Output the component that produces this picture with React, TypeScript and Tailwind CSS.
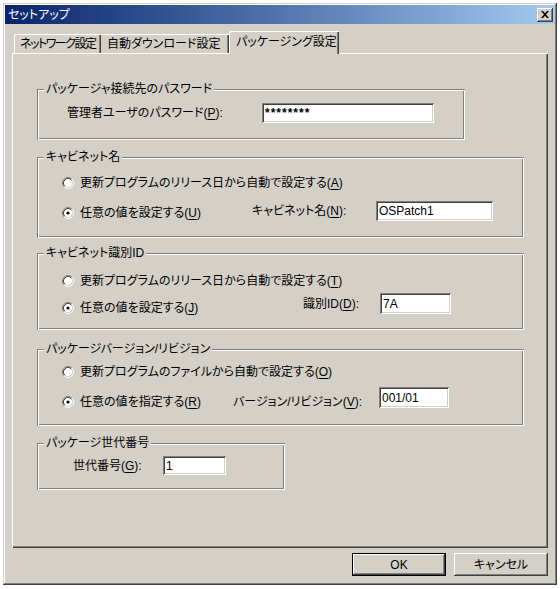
import type { ReactNode } from "react";

const ui =
  "font-['Liberation_Sans','Noto_Sans_CJK_JP',sans-serif] text-[12px] leading-[14px] text-black [font-feature-settings:'palt']";

const raised =
  "shadow-[inset_-1px_-1px_#404040,inset_1px_1px_#fff,inset_-2px_-2px_#808080]";

function Key(props: { k: string }) {
  return (
    <>
      (<span className="underline underline-offset-[2px]">{props.k}</span>)
    </>
  );
}

function Radio(props: { checked?: boolean }) {
  return (
    <svg width="12" height="12" viewBox="0 0 12 12" className="shrink-0">
      <circle cx="6" cy="6" r="4.5" fill="#fff" />
      <path d="M2.11 9.89A5.5 5.5 0 0 1 9.89 2.11" fill="none" stroke="#808080" />
      <path d="M9.89 2.11A5.5 5.5 0 0 1 2.11 9.89" fill="none" stroke="#fff" />
      <path d="M2.82 9.18A4.5 4.5 0 0 1 9.18 2.82" fill="none" stroke="#404040" />
      <path d="M9.18 2.82A4.5 4.5 0 0 1 2.82 9.18" fill="none" stroke="#d4d0c8" />
      {props.checked && <circle cx="6" cy="6" r="1.6" fill="#000" />}
    </svg>
  );
}

function Field(props: { value: string; className: string }) {
  return (
    <div
      className={`bg-white flex items-center pl-[3px] shrink-0 shadow-[inset_1px_1px_#808080,inset_-1px_-1px_#fff,inset_2px_2px_#404040,inset_-2px_-2px_#d4d0c8] ${props.className}`}
    >
      {props.value}
    </div>
  );
}

function Group(props: { title: string; className: string; children: ReactNode }) {
  return (
    <div
      className={`relative shrink-0 shadow-[inset_1px_1px_#808080,inset_-1px_-1px_#fff,inset_2px_2px_#fff,inset_-2px_-2px_#808080] ${props.className}`}
    >
      <span className="absolute left-[7px] top-[-7px] bg-[#d4d0c8] px-[2px] whitespace-nowrap">
        {props.title}
      </span>
      {props.children}
    </div>
  );
}

function Option(props: { checked?: boolean; children: ReactNode; className?: string }) {
  return (
    <div className={`flex items-center gap-[6px] ${props.className ?? ""}`}>
      <Radio checked={props.checked} />
      <span className="whitespace-nowrap">{props.children}</span>
    </div>
  );
}

export default function App() {
  return (
    <div className={`w-[560px] h-[589px] bg-white p-[3px] ${ui}`}>
      <div className="w-[554px] h-[582px] bg-[#d4d0c8] p-[2px] flex flex-col shadow-[inset_-1px_-1px_#404040,inset_1px_1px_#d4d0c8,inset_-2px_-2px_#808080,inset_2px_2px_#fff]">
        {/* title bar */}
        <div className="h-[19px] flex items-center justify-between bg-linear-to-r from-[#0a246a] to-[#a6caf0] pl-[3px] pr-[2px]">
          <span className="text-white">セットアップ</span>
          <div className={`w-[16px] h-[14px] bg-[#d4d0c8] flex items-center justify-center ${raised}`}>
            <svg width="8" height="7" viewBox="0 0 8 7">
              <path d="M0 0h2l2 2.2L6 0h2L5 3.5 8 7H6L4 4.8 2 7H0l3-3.5z" fill="#000" />
            </svg>
          </div>
        </div>

        {/* tabs */}
        <div className="mt-[7px] ml-[9px] flex items-end h-[22px] whitespace-nowrap">
          <div className="w-[87px] h-[19px] shrink-0 flex items-center pl-[6px] tracking-[-1.5px] rounded-tl-[2px] shadow-[inset_1px_1px_#fff,inset_-1px_0_#404040,inset_-2px_0_#808080]">
            ネットワーク設定
          </div>
          <div className="w-[128px] h-[19px] shrink-0 flex items-center pl-[6px] shadow-[inset_0_1px_#fff,inset_-1px_0_#404040,inset_-2px_0_#808080]">
            自動ダウンロード設定
          </div>
          <div className="relative z-10 w-[110px] h-[23px] shrink-0 -mb-[1px] bg-[#d4d0c8] flex items-center pl-[7px] pb-[2px] rounded-tl-[2px] shadow-[inset_1px_1px_#fff,inset_-1px_0_#404040,inset_-2px_0_#808080]">
            パッケージング設定
          </div>
        </div>

        {/* panel */}
        <div className="mx-[7px] w-[536px] h-[495px] pl-[25px] flex flex-col shadow-[inset_1px_1px_#fff,inset_-1px_-1px_#404040,inset_-2px_-2px_#808080]">
          <Group title="パッケージャ接続先のパスワード" className="mt-[36px] w-[428px] h-[51px] pt-[14px]">
            <div className="flex items-center h-[20px]">
              <span className="pl-[30px] w-[225px] whitespace-nowrap">
                管理者ユーザのパスワード<Key k="P" />:
              </span>
              <Field value="********" className="w-[172px] h-[20px] font-bold tracking-[1px]" />
            </div>
          </Group>

          <Group title="キャビネット名" className="mt-[17px] w-[487px] h-[81px] pt-[16px] pl-[25px]">
            <div className="flex items-center h-[20px]">
              <Option>
                更新プログラムのリリース日から自動で設定する<Key k="A" />
              </Option>
            </div>
            <div className="mt-[8px] flex items-center h-[20px]">
              <Option checked className="w-[190px] mt-[4px]">
                任意の値を設定する<Key k="U" />
              </Option>
              <span className="w-[124px] whitespace-nowrap">
                キャビネット名<Key k="N" />:
              </span>
              <Field value="OSPatch1" className="w-[117px] h-[20px]" />
            </div>
          </Group>

          <Group title="キャビネット識別ID" className="mt-[15px] w-[487px] h-[77px] pt-[18px] pl-[25px]">
            <div className="flex items-center h-[20px]">
              <Option>
                更新プログラムのリリース日から自動で設定する<Key k="T" />
              </Option>
            </div>
            <div className="mt-[2px] flex items-center h-[21px]">
              <Option checked className="w-[241px] mt-[8px]">
                任意の値を設定する<Key k="J" />
              </Option>
              <span className="w-[77px] whitespace-nowrap">
                識別ID<Key k="D" />:
              </span>
              <Field value="7A" className="w-[71px] h-[21px]" />
            </div>
          </Group>

          <Group title="パッケージバージョン/リビジョン" className="mt-[19px] w-[487px] h-[77px] pt-[13px] pl-[25px]">
            <div className="flex items-center h-[20px]">
              <Option>
                更新プログラムのファイルから自動で設定する<Key k="O" />
              </Option>
            </div>
            <div className="mt-[5px] flex items-center h-[21px]">
              <Option checked className="w-[171px] mt-[9px]">
                任意の値を指定する<Key k="R" />
              </Option>
              <span className="w-[146px] mt-[9px] whitespace-nowrap">
                バージョン/リビジョン<Key k="V" />:
              </span>
              <Field value="001/01" className="w-[70px] h-[21px]" />
            </div>
          </Group>

          <Group title="パッケージ世代番号" className="mt-[17px] w-[248px] h-[47px] pt-[13px]">
            <div className="flex items-center h-[19px]">
              <span className="pl-[36px] w-[126px] whitespace-nowrap">
                世代番号<Key k="G" />:
              </span>
              <Field value="1" className="w-[63px] h-[19px]" />
            </div>
          </Group>
        </div>

        {/* buttons */}
        <div className="mt-[5px] flex justify-end gap-[8px] pr-[7px]">
          <div className="w-[94px] h-[23px] border border-black">
            <div className={`w-full h-full flex items-center justify-center ${raised}`}>OK</div>
          </div>
          <div className={`w-[94px] h-[23px] flex items-center justify-center ${raised}`}>キャンセル</div>
        </div>
      </div>
    </div>
  );
}
